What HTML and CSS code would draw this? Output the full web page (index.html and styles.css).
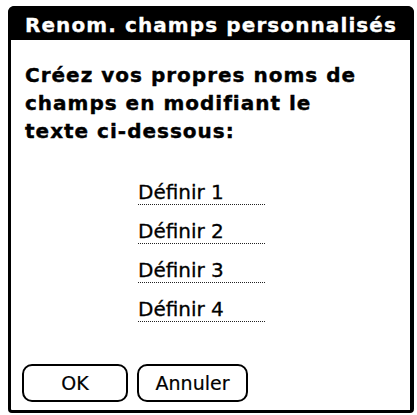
FILE: index.html
```html
<!DOCTYPE html>
<html lang="fr">
<head>
<meta charset="utf-8">
<link rel="stylesheet" href="styles.css">
</head>
<body>
<div class="dialog">
  <div class="titlebar">Renom. champs personnalisés</div>
  <div class="content">
    <p class="prompt">Créez vos propres noms de<br>champs en modifiant le<br>texte ci-dessous:</p>
    <div class="fields">
      <div class="field">Définir 1</div>
      <div class="field">Définir 2</div>
      <div class="field">Définir 3</div>
      <div class="field">Définir 4</div>
    </div>
    <div class="buttons">
      <div class="btn btn-ok">OK</div>
      <div class="btn btn-cancel">Annuler</div>
    </div>
  </div>
</div>
</body>
</html>
```

FILE: styles.css
```css
html, body {
  margin: 0;
  padding: 0;
  background: #ffffff;
}
body {
  font-family: "DejaVu Sans", "Liberation Sans", sans-serif;
  color: #000;
  padding: 6px 0 0 8px;
}
.dialog {
  width: 399px;
  height: 401px;
  border: 3px solid #000;
  border-right-width: 4px;
  border-radius: 7px 7px 4px 4px;
  display: flex;
  flex-direction: column;
  background: #fff;
}
.titlebar {
  background: #000;
  color: #fff;
  height: 29px;
  margin: -3px -4px 0 -3px;
  padding-top: 5px;
  border-radius: 6px 6px 0 0;
  font-weight: bold;
  font-size: 20px;
  line-height: 29px;
  text-align: center;
  letter-spacing: 1.1px;
  -webkit-text-stroke: 0.3px #fff;
}
.content {
  flex: 1;
  display: flex;
  flex-direction: column;
  padding: 0 0 8px 0;
}
.prompt {
  margin: 21px 0 0 14px;
  font-weight: bold;
  font-size: 20px;
  line-height: 28px;
  letter-spacing: 1px;
  -webkit-text-stroke: 0.4px #000;
}
.fields {
  margin: 35px 0 0 127px;
  display: flex;
  flex-direction: column;
  gap: 14px;
}
.field {
  width: 127px;
  font-size: 20px;
  line-height: 24px;
  border-bottom: 1px dotted #222;
  -webkit-text-stroke: 0.3px #000;
}
.buttons {
  margin-top: auto;
  margin-left: 11px;
  display: flex;
  gap: 9px;
}
.btn {
  height: 34px;
  border: 2px solid #000;
  border-radius: 10px;
  font-size: 19px;
  line-height: 34px;
  text-align: center;
  -webkit-text-stroke: 0.2px #000;
}
.btn-ok { width: 102px; }
.btn-cancel { width: 107px; }
```
